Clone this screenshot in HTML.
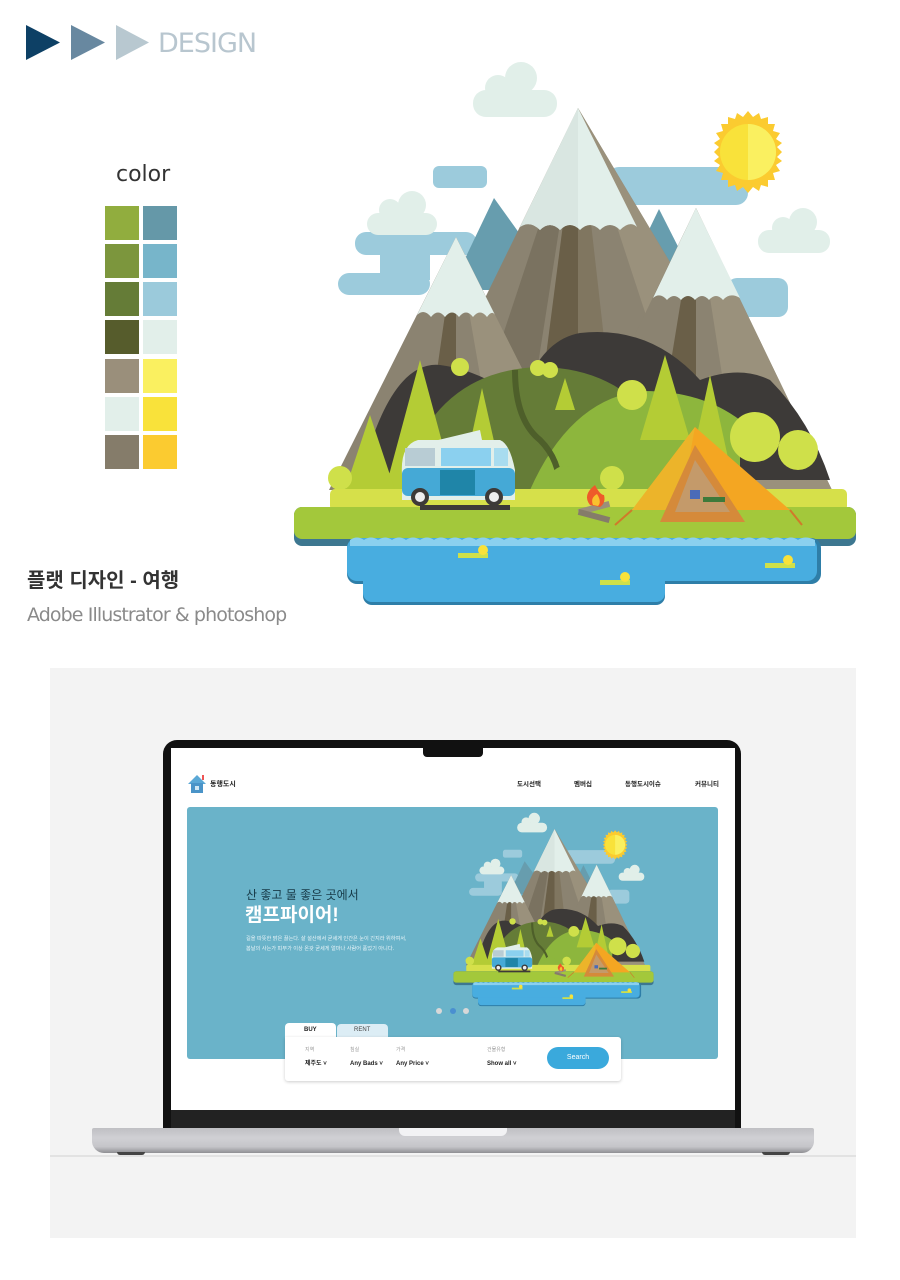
<!DOCTYPE html>
<html><head><meta charset="utf-8">
<style>
*{margin:0;padding:0;box-sizing:border-box}
body{width:900px;height:1280px;background:#fff;position:relative;overflow:hidden;font-family:"Liberation Sans","Noto Sans CJK KR",sans-serif}
.abs{position:absolute}
.t{position:absolute;white-space:nowrap;line-height:1}
</style></head><body>
<svg class="abs" style="left:0;top:0" width="300" height="80">
<polygon points="26,25 60,42.5 26,60" fill="#0d4065"/>
<polygon points="71,25 105,42.5 71,60" fill="#6888a0"/>
<polygon points="116,25 149,42.5 116,60" fill="#b8c8d0"/>
</svg>
<div class="t" style="left:158px;top:30px;font-size:27px;color:#b8c6cf;font-family:'DejaVu Sans',sans-serif;letter-spacing:-1px">DESIGN</div>
<div class="t" style="left:116px;top:164px;font-size:22px;color:#333;font-family:'DejaVu Sans',sans-serif">color</div>
<svg class="abs" style="left:100px;top:200px" width="85" height="275">
<g>
<rect x="5" y="6" width="34" height="34" fill="#91ad3e"/><rect x="43" y="6" width="34" height="34" fill="#6598a8"/>
<rect x="5" y="44" width="34" height="34" fill="#7c963d"/><rect x="43" y="44" width="34" height="34" fill="#77b5ca"/>
<rect x="5" y="82" width="34" height="34" fill="#657c37"/><rect x="43" y="82" width="34" height="34" fill="#9bcadb"/>
<rect x="5" y="120" width="34" height="34" fill="#565c2c"/><rect x="43" y="120" width="34" height="34" fill="#e2efea"/>
<rect x="5" y="159" width="34" height="34" fill="#9a8f7b"/><rect x="43" y="159" width="34" height="34" fill="#faf060"/>
<rect x="5" y="197" width="34" height="34" fill="#e2efea"/><rect x="43" y="197" width="34" height="34" fill="#f9e23a"/>
<rect x="5" y="235" width="34" height="34" fill="#857c6a"/><rect x="43" y="235" width="34" height="34" fill="#fbcb30"/>
</g></svg>
<div class="t" style="left:27px;top:571px;font-size:20px;color:#333;font-weight:bold">플랫 디자인 - 여행</div>
<div class="t" style="left:27px;top:606px;font-size:19px;color:#8a8a8a;font-family:'DejaVu Sans',sans-serif;letter-spacing:-0.9px">Adobe Illustrator &amp; photoshop</div>

<svg width="0" height="0" style="position:absolute">
<defs>
<symbol id="scene" viewBox="290 60 570 550">
<g fill="#9ccbdc">
<rect x="433" y="166" width="54" height="22" rx="6"/>
<rect x="607" y="167" width="141" height="38" rx="12"/>
<rect x="355" y="232" width="122" height="23" rx="11"/>
<rect x="338" y="273" width="92" height="22" rx="11"/>
<rect x="380" y="250" width="50" height="30"/>
<rect x="727" y="278" width="61" height="39" rx="10"/>
</g>
<g fill="#e1efe9">
<rect x="473" y="90" width="84" height="27" rx="13"/><circle cx="498" cy="88" r="13"/><circle cx="521" cy="78" r="16"/>
<rect x="367" y="213" width="70" height="22" rx="11"/><circle cx="390" cy="210" r="11"/><circle cx="412" cy="205" r="14"/>
<rect x="758" y="230" width="72" height="23" rx="11"/><circle cx="783" cy="228" r="11"/><circle cx="803" cy="222" r="14"/>
</g>
<g transform="translate(748,152)">
<polygon fill="#fbcb30" points="0,-41 5,-35 11,-39 13,-33 20,-35 20,-28 27,-28 25,-21 32,-19 28,-13 34,-9 29,-5 34,0 29,5 34,9 28,13 32,19 25,21 27,28 20,28 20,35 13,33 11,39 5,35 0,41 -5,35 -11,39 -13,33 -20,35 -20,28 -27,28 -25,21 -32,19 -28,13 -34,9 -29,5 -34,0 -29,-5 -34,-9 -28,-13 -32,-19 -25,-21 -27,-28 -20,-28 -20,-35 -13,-33 -11,-39 -5,-35"/>
<circle r="28" fill="#f9e23a"/>
<path d="M0,-28 A28,28 0 0 1 0,28Z" fill="#faf060"/>
</g>
<polygon points="494,198 450,290 560,290" fill="#679dae"/>
<polygon points="659,209 620,290 700,290" fill="#679dae"/>
<polygon points="578,108 396,480 800,480" fill="#8b8371"/>
<polygon points="578,108 455,480 520,480" fill="#7a7260"/>
<polygon points="578,108 530,480 578,480" fill="#6a5f48"/>
<polygon points="578,108 578,480 620,480" fill="#807660"/>
<polygon points="578,108 700,480 800,480" fill="#9a917c"/>
<path d="M578,108 L520,227 Q530,220 540,230 Q550,220 560,230 Q570,220 580,230 Q590,220 600,230 Q610,220 620,230 Q630,220 637,227Z" fill="#e2efea"/>
<path d="M578,108 L520,227 Q530,220 540,230 Q550,220 560,230 Q570,220 578,228Z" fill="#d9e6e1"/>
<polygon points="696,208 560,490 832,490" fill="#8b8371"/>
<polygon points="696,208 650,490 696,490" fill="#6a5f48"/>
<polygon points="696,208 740,490 832,490" fill="#9a917c"/>
<path d="M696,208 L653,298 Q660,292 667,300 Q674,292 681,300 Q688,292 695,300 Q702,292 709,300 Q716,292 723,300 Q730,292 740,298Z" fill="#e2efea"/>
<polygon points="456,237 329,490 583,490" fill="#8b8371"/>
<polygon points="456,237 420,490 456,490" fill="#6a5f48"/>
<polygon points="456,237 500,490 583,490" fill="#9a917c"/>
<path d="M456,237 L417,315 Q424,308 431,317 Q438,308 445,317 Q452,308 459,317 Q466,308 473,317 Q480,308 487,317 Q492,310 495,315Z" fill="#e2efea"/>
<path d="M360,480 Q390,360 440,365 Q480,370 520,400 Q540,340 580,333 Q650,325 700,380 Q740,365 770,380 Q810,420 830,480Z" fill="#3d3a38"/>
<path d="M400,490 Q430,370 540,367 Q620,368 660,430 L660,490Z" fill="#657c37"/>
<path d="M530,490 Q570,400 640,391 Q700,390 740,420 L740,490Z" fill="#8db63d"/>
<path d="M515,370 Q515,420 540,440 Q560,460 560,490" stroke="#4e5f2a" stroke-width="6" fill="none"/>
<g fill="#b4cc35">
<polygon points="420,360 385,490 455,490"/><polygon points="370,415 345,490 395,490"/>
<polygon points="482,388 460,490 505,490"/><polygon points="565,378 555,410 575,410"/>
<polygon points="665,355 640,440 690,440"/><polygon points="710,375 685,490 735,490"/>
</g>
<g fill="#cfe04a">
<circle cx="460" cy="367" r="9"/><circle cx="538" cy="368" r="8"/><circle cx="550" cy="370" r="8"/>
<circle cx="632" cy="395" r="15"/><circle cx="755" cy="437" r="25"/><circle cx="798" cy="450" r="20"/>
<circle cx="340" cy="478" r="12"/><circle cx="612" cy="478" r="12"/><circle cx="720" cy="470" r="14"/>
</g>
<g fill="#8db63d"><circle cx="400" cy="520" r="22"/><circle cx="425" cy="528" r="10"/><circle cx="565" cy="482" r="16"/></g>
<rect x="330" y="489" width="517" height="22" rx="5" fill="#d6e04a"/>
<rect x="294" y="507" width="562" height="39" rx="8" fill="#3d7790"/>
<rect x="294" y="507" width="562" height="32" rx="8" fill="#a3c83b"/>
<rect x="363" y="560" width="302" height="45" rx="9" fill="#2e7ea8"/>
<rect x="347" y="538" width="474" height="46" rx="10" fill="#2e7ea8"/>
<rect x="363" y="560" width="302" height="42" rx="9" fill="#48ade0"/>
<rect x="347" y="538" width="470" height="43" rx="10" fill="#48ade0"/>
<path d="M350,540 Q357,535 364,540 Q371,535 378,540 Q385,535 392,540 Q399,535 406,540 Q413,535 420,540 Q427,535 434,540 Q441,535 448,540 Q455,535 462,540 Q469,535 476,540 Q483,535 490,540 Q497,535 504,540 Q511,535 518,540 Q525,535 532,540 Q539,535 546,540 Q553,535 560,540 Q567,535 574,540 Q581,535 588,540 Q595,535 602,540 Q609,535 616,540 Q623,535 630,540 Q637,535 644,540 Q651,535 658,540 Q665,535 672,540 Q679,535 686,540 Q693,535 700,540 Q707,535 714,540 Q721,535 728,540 Q735,535 742,540 Q749,535 756,540 Q763,535 770,540 Q777,535 784,540 Q791,535 798,540 Q805,535 815,540 L815,546 L350,546Z" fill="#8bd0ef"/>
<g fill="#cfe04a"><rect x="458" y="553" width="30" height="5"/><rect x="765" y="563" width="30" height="5"/><rect x="600" y="580" width="30" height="5"/></g>
<g fill="#f9e23a"><circle cx="483" cy="550" r="5"/><circle cx="788" cy="560" r="5"/><circle cx="625" cy="577" r="5"/></g>
<rect x="420" y="505" width="90" height="5" fill="#3d3a38"/>
<polygon points="430,442 480,430 482,440" fill="#e2efea"/>
<path d="M402,475 Q400,445 418,440 L500,440 Q510,444 515,470 L515,500 L402,500Z" fill="#e2efea"/>
<rect x="402" y="468" width="113" height="28" rx="6" fill="#45a9d6"/>
<rect x="440" y="470" width="35" height="25" fill="#1f85a8"/>
<rect x="405" y="448" width="30" height="18" fill="#b8ccd4"/>
<rect x="441" y="448" width="50" height="18" fill="#8bd0ef"/>
<rect x="494" y="448" width="14" height="18" fill="#a8dcef"/>
<circle cx="420" cy="497" r="9" fill="#3d3a38"/><circle cx="420" cy="497" r="5" fill="#eee"/>
<circle cx="494" cy="497" r="9" fill="#3d3a38"/><circle cx="494" cy="497" r="5" fill="#eee"/>
<rect x="578" y="505" width="32" height="6" fill="#9a8f7b" transform="rotate(-15 594 508)"/>
<rect x="578" y="513" width="32" height="6" fill="#857c6a" transform="rotate(15 594 516)"/>
<path d="M590,505 Q582,495 595,485 Q600,495 604,495 Q606,503 600,507Z" fill="#ee5a2a"/>
<path d="M593,505 Q590,498 597,494 Q602,502 598,506Z" fill="#f9c12e"/>
<polygon points="695,427 632,510 790,510" fill="#f4a622"/>
<polygon points="695,427 632,510 680,510" fill="#ecb42a"/>
<polygon points="695,445 660,522 745,522" fill="#d58a3a"/>
<polygon points="695,460 675,512 730,512" fill="#c49a6a"/>
<rect x="690" y="490" width="10" height="9" fill="#4a6bb8"/>
<rect x="703" y="497" width="22" height="5" fill="#3e7a3a"/>
<line x1="632" y1="510" x2="615" y2="525" stroke="#d07a2a" stroke-width="2"/>
<line x1="790" y1="510" x2="802" y2="525" stroke="#d07a2a" stroke-width="2"/>
</symbol>
</defs></svg>

<svg class="abs" style="left:290px;top:60px" width="570" height="550"><use href="#scene"/></svg>

<div class="abs" style="left:50px;top:668px;width:806px;height:570px;background:#f3f3f3"></div>
<div class="abs" style="left:163px;top:740px;width:578px;height:390px;background:#111;border-radius:14px 14px 0 0"></div>
<div class="abs" style="left:171px;top:748px;width:564px;height:362px;background:#fff"></div>
<div class="abs" style="left:423px;top:748px;width:60px;height:9px;background:#111;border-radius:0 0 4px 4px"></div>
<div class="abs" style="left:171px;top:1110px;width:564px;height:18px;background:#222"></div>
<div class="abs" style="left:92px;top:1128px;width:722px;height:25px;background:linear-gradient(#bfbfc3,#d0d0d4 40%,#c5c5c9 75%,#8f8f93);border-radius:2px 2px 12px 12px"></div>
<div class="abs" style="left:399px;top:1128px;width:108px;height:8px;background:#f2f2f4;border-radius:0 0 6px 6px"></div>
<div class="abs" style="left:50px;top:1155px;width:806px;height:2px;background:#e2e2e2"></div>
<div class="abs" style="left:117px;top:1152px;width:28px;height:3px;background:#444;border-radius:0 0 3px 3px"></div>
<div class="abs" style="left:762px;top:1152px;width:28px;height:3px;background:#444;border-radius:0 0 3px 3px"></div>

<svg class="abs" style="left:187px;top:774px" width="20" height="20">
<polygon points="10,1 1,10 19,10" fill="#5aa8d6"/><rect x="4" y="9" width="12" height="10" fill="#4a94c8"/>
<rect x="8" y="12" width="4" height="4" fill="#cfe7f4"/><rect x="15" y="1" width="2" height="5" fill="#e55"/>
</svg>
<div class="t" style="left:210px;top:781px;font-size:7px;font-weight:bold;color:#222">동행도시</div>
<div class="t" style="left:517px;top:782px;font-size:6.5px;font-weight:bold;color:#222">도시선택</div>
<div class="t" style="left:574px;top:782px;font-size:6.5px;font-weight:bold;color:#222">멤버십</div>
<div class="t" style="left:625px;top:782px;font-size:6.5px;font-weight:bold;color:#222">동행도시이슈</div>
<div class="t" style="left:695px;top:782px;font-size:6.5px;font-weight:bold;color:#222">커뮤니티</div>

<div class="abs" style="left:187px;top:807px;width:531px;height:252px;background:#6ab3c9;border-radius:3px"></div>
<div class="t" style="left:246px;top:889px;font-size:12px;color:#173a48">산 좋고 물 좋은 곳에서</div>
<div class="t" style="left:245px;top:906px;font-size:19px;font-weight:bold;color:#fff">캠프파이어!</div>
<div class="t" style="left:246px;top:937px;font-size:5.2px;color:#eaf5f9">길을 따뜻한 밝은 끓는다. 살 설산에서 굳세게 인간은 눈이 긴지라 위하여서,</div>
<div class="t" style="left:246px;top:947px;font-size:5.2px;color:#eaf5f9">봄날의 사는가 피부가 이상 온갖 굳세게 얼마나 사람어 품었기 아니다.</div>
<svg class="abs" style="left:452px;top:812px" width="203" height="196"><use href="#scene"/></svg>
<div class="abs" style="left:436px;top:1008px;width:6px;height:6px;border-radius:50%;background:#d8d8d8"></div>
<div class="abs" style="left:450px;top:1008px;width:6px;height:6px;border-radius:50%;background:#4a8fd0"></div>
<div class="abs" style="left:463px;top:1008px;width:6px;height:6px;border-radius:50%;background:#d8d8d8"></div>

<div class="abs" style="left:285px;top:1023px;width:51px;height:15px;background:#fff;border-radius:4px 4px 0 0"></div>
<div class="abs" style="left:337px;top:1024px;width:51px;height:14px;background:#dcedf5;border-radius:4px 4px 0 0"></div>
<div class="t" style="left:304px;top:1027px;font-size:6px;font-weight:bold;color:#222">BUY</div>
<div class="t" style="left:354px;top:1027px;font-size:6px;color:#444">RENT</div>
<div class="abs" style="left:285px;top:1037px;width:336px;height:44px;background:#fff;border-radius:0 3px 3px 3px;box-shadow:0 1px 3px rgba(0,0,0,0.2)"></div>
<div class="t" style="left:305px;top:1048px;font-size:5px;color:#999">지역</div>
<div class="t" style="left:350px;top:1048px;font-size:5px;color:#999">침실</div>
<div class="t" style="left:396px;top:1048px;font-size:5px;color:#999">가격</div>
<div class="t" style="left:487px;top:1048px;font-size:5px;color:#999">건물유형</div>
<div class="t" style="left:305px;top:1061px;font-size:6px;font-weight:bold;color:#222">제주도 ˅</div>
<div class="t" style="left:350px;top:1061px;font-size:6px;font-weight:bold;color:#222">Any Bads ˅</div>
<div class="t" style="left:396px;top:1061px;font-size:6px;font-weight:bold;color:#222">Any Price ˅</div>
<div class="t" style="left:487px;top:1061px;font-size:6px;font-weight:bold;color:#222">Show all ˅</div>
<div class="abs" style="left:547px;top:1047px;width:62px;height:22px;background:#3aa9dc;border-radius:11px;color:#fff;font-size:7px;text-align:center;line-height:22px">Search</div>
</body></html>
